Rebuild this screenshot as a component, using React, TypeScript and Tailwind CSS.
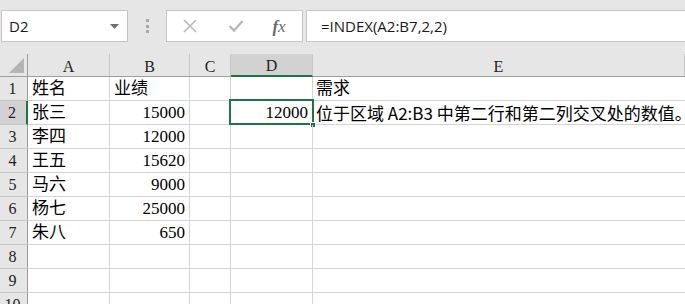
import React from "react";

const cols = [
  { key: "A", w: "w-[82px] shrink-0" },
  { key: "B", w: "w-[80px] shrink-0" },
  { key: "C", w: "w-[41px] shrink-0" },
  { key: "D", w: "w-[82px] shrink-0" },
  { key: "E", w: "flex-1 min-w-0" },
];

const rows: { a?: string; b?: string; d?: string; e?: string }[] = [
  { a: "姓名", b: "业绩", e: "需求" },
  { a: "张三", b: "15000", d: "12000", e: "位于区域 A2:B3 中第二行和第二列交叉处的数值。" },
  { a: "李四", b: "12000" },
  { a: "王五", b: "15620" },
  { a: "马六", b: "9000" },
  { a: "杨七", b: "25000" },
  { a: "朱八", b: "650" },
  {},
  {},
  {},
];

const cellFont = { fontFamily: '"Liberation Serif", "Noto Sans CJK SC", serif' };
const sansFont = { fontFamily: '"Noto Sans CJK SC", sans-serif' };

const App = () => {
  return (
    <div className="w-[685px] h-[304px] overflow-hidden bg-white text-black">
      {/* toolbar */}
      <div
        className="h-[54px] bg-[#e6e6e6] flex items-start pt-[10px] pl-[1px]"
        style={{ fontFamily: '"Open Sans", "Liberation Sans", sans-serif' }}
      >
        <div className="w-[127px] shrink-0 h-[32px] bg-white border border-[#c6c6c6] flex items-center justify-between pl-[7px] pr-[8px]">
          <span className="text-[15px] text-[#1a1a1a]">D2</span>
          <svg width="9" height="5" viewBox="0 0 9 5">
            <path d="M0 0 L9 0 L4.5 5 Z" fill="#707070" />
          </svg>
        </div>
        <div className="w-[38px] shrink-0 h-[32px] flex flex-col items-center justify-center gap-[2.5px]">
          <div className="w-[3px] h-[3px] bg-[#a8a8a8]" />
          <div className="w-[3px] h-[3px] bg-[#a8a8a8]" />
          <div className="w-[3px] h-[3px] bg-[#a8a8a8]" />
        </div>
        <div className="w-[137px] shrink-0 h-[32px] bg-white border border-[#c6c6c6] flex items-center">
          <div className="w-[46px] flex justify-center">
            <svg width="16" height="16" viewBox="0 0 16 16">
              <path d="M2 2 L14 14 M14 2 L2 14" stroke="#b9b9b9" strokeWidth="1.6" />
            </svg>
          </div>
          <div className="w-[46px] flex justify-center">
            <svg width="16" height="14" viewBox="0 0 16 14">
              <path d="M1.5 7 L6 11.5 L14.5 2" stroke="#b9b9b9" strokeWidth="2.4" fill="none" />
            </svg>
          </div>
          <div className="w-[40px] flex justify-center">
            <span
              className="italic text-[17px] text-[#6a6a6a] leading-none"
              style={{ fontFamily: '"Liberation Serif", serif' }}
            >
              <span className="font-semibold">f</span>x
            </span>
          </div>
        </div>
        <div className="ml-[3px] flex-1 h-[32px] bg-white border-y border-l border-[#c6c6c6] flex items-center pl-[14px]">
          <span className="text-[15px] text-[#1a1a1a]">=INDEX(A2:B7,2,2)</span>
        </div>
      </div>

      {/* column headers */}
      <div className="flex h-[23px] bg-[#e6e6e6] border-b border-[#9e9e9e]">
        <div className="w-[28px] shrink-0 border-r border-[#9e9e9e] relative">
          <svg className="absolute right-[3px] bottom-[3px]" width="15" height="15" viewBox="0 0 15 15">
            <path d="M15 0 L15 15 L0 15 Z" fill="#b4b4b4" />
          </svg>
        </div>
        {cols.map((c) => (
          <div
            key={c.key}
            className={`${c.w} flex items-center justify-center pt-[3px] text-[16px] text-[#222] ${
              c.key === "D"
                ? "bg-[#d2d2d2] border-b-2 border-[#217346] -mb-[1px] border-r border-r-[#c6c6c6]"
                : "border-r border-[#c6c6c6]"
            }`}
            style={cellFont}
          >
            {c.key}
          </div>
        ))}
      </div>

      {/* rows */}
      {rows.map((r, i) => {
        const n = i + 1;
        const sel = n === 2;
        return (
          <div key={n} className="flex h-[24px]">
            <div
              className={`w-[28px] shrink-0 flex items-center justify-center pr-[2px] text-[16px] text-[#222] border-b border-[#c6c6c6] ${
                sel ? "bg-[#d2d2d2] border-r-2 border-r-[#217346]" : "bg-[#e6e6e6] border-r border-r-[#9e9e9e]"
              }`}
              style={cellFont}
            >
              {n}
            </div>
            <div
              className="w-[82px] shrink-0 border-r border-b border-[#d4d4d4] flex items-center pl-[4px] text-[17px] whitespace-nowrap"
              style={cellFont}
            >
              {r.a}
            </div>
            <div
              className={`w-[80px] shrink-0 border-r border-b border-[#d4d4d4] flex items-center text-[17px] whitespace-nowrap ${
                n === 1 ? "pl-[4px]" : "justify-end pr-[4px]"
              }`}
              style={cellFont}
            >
              {r.b}
            </div>
            <div className="w-[41px] shrink-0 border-r border-b border-[#d4d4d4]" />
            <div
              className="w-[82px] shrink-0 border-r border-b border-[#d4d4d4] flex items-center justify-end pr-[4px] text-[17px] relative"
              style={cellFont}
            >
              {r.d}
              {sel && (
                <>
                  <div className="absolute left-[-2px] top-[-2px] right-[-2px] bottom-[-1px] border-2 border-[#217346]" />
                  <div className="absolute right-[-4px] bottom-[-4px] w-[6px] h-[6px] bg-[#217346] border border-white" />
                </>
              )}
            </div>
            <div
              className="flex-1 min-w-0 border-b border-[#d4d4d4] flex items-center pl-[3px] text-[17px] whitespace-nowrap"
              style={n === 1 ? cellFont : sansFont}
            >
              {r.e}
            </div>
          </div>
        );
      })}
    </div>
  );
};

export default App;
